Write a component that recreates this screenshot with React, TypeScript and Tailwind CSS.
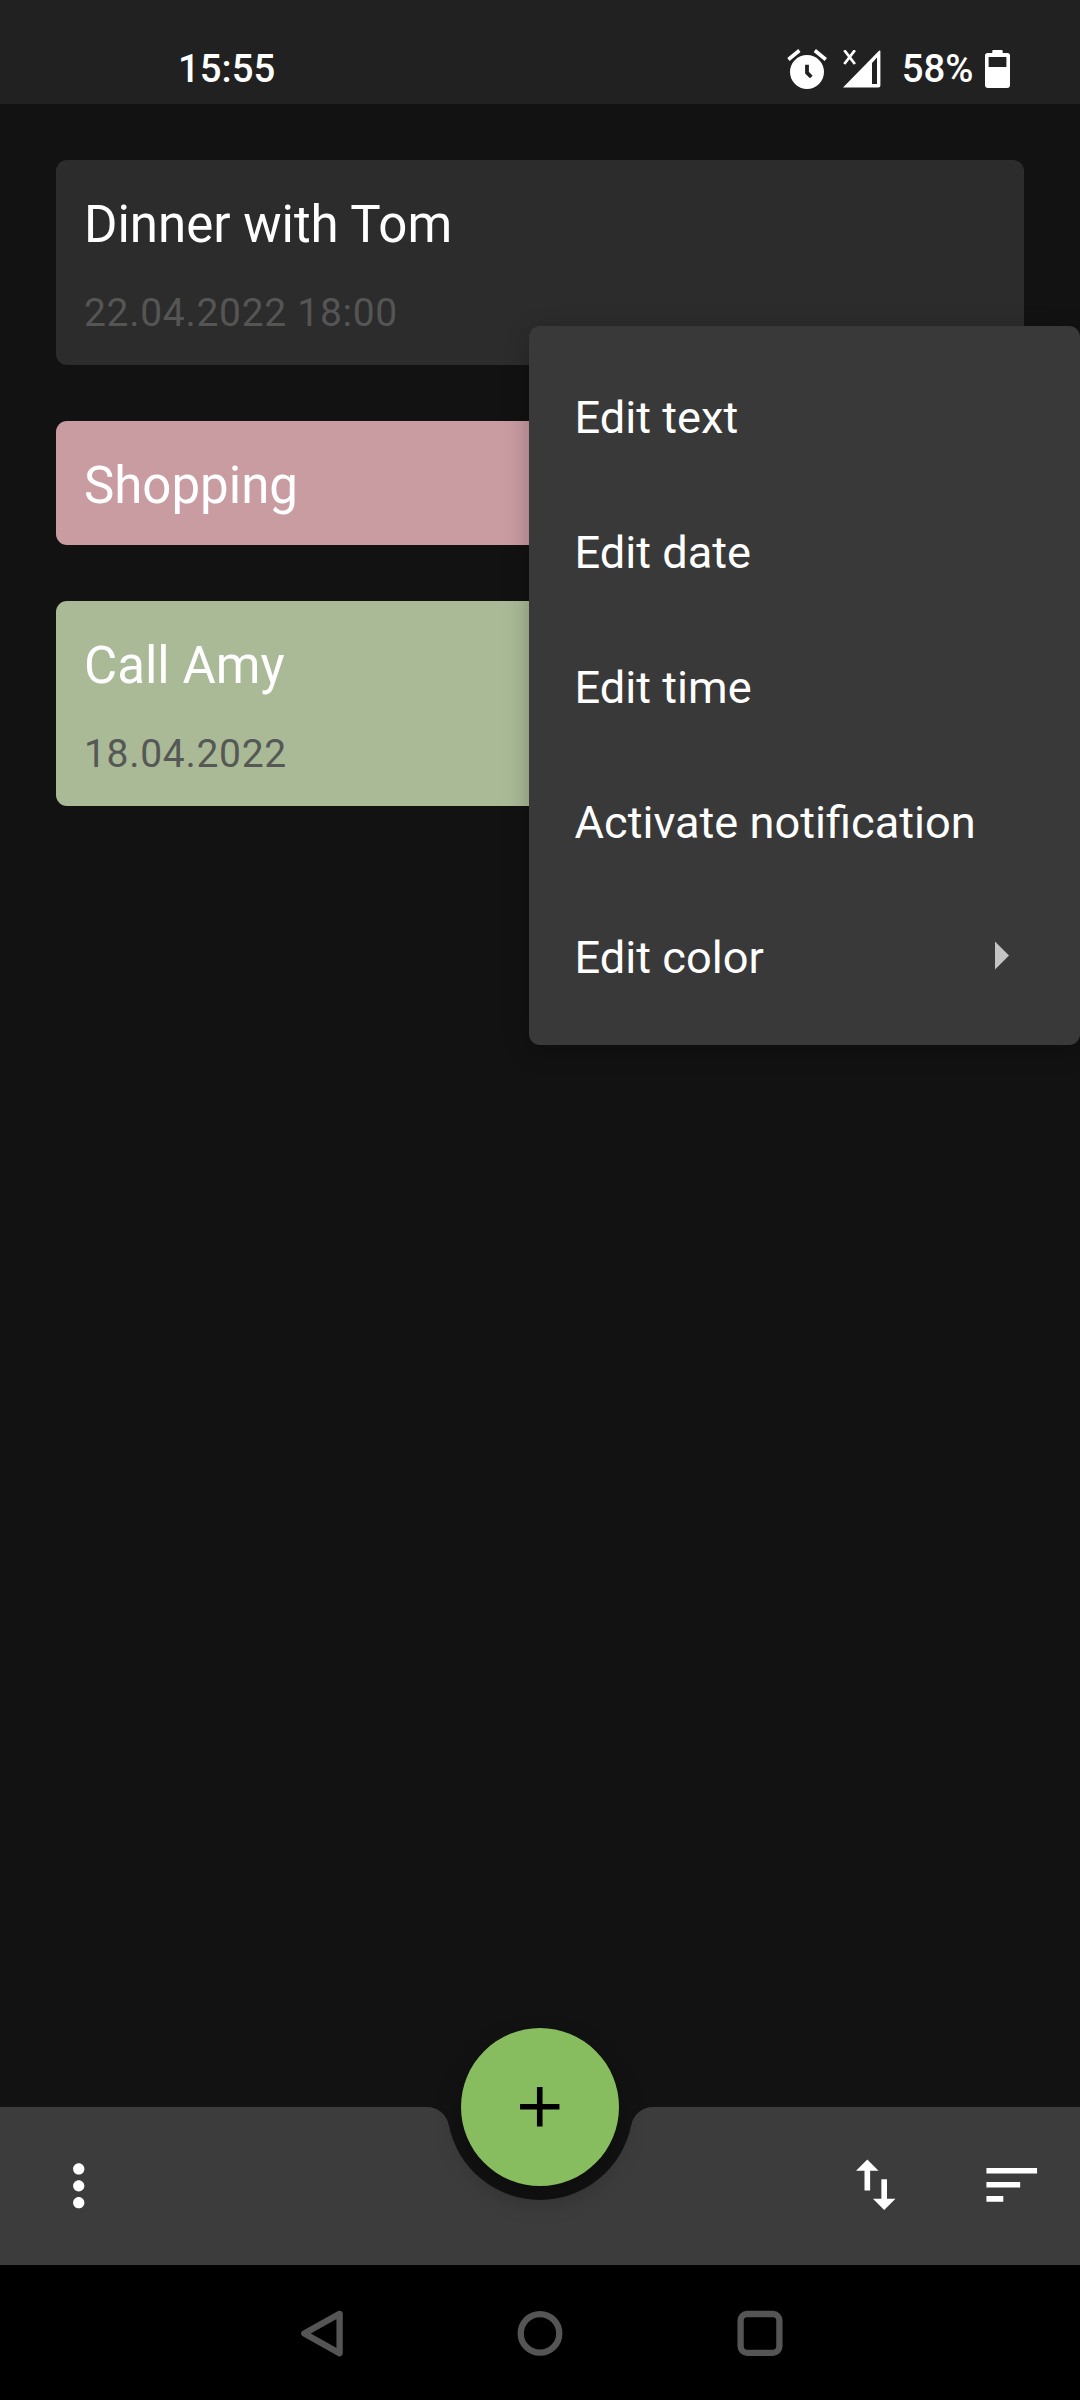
import React from "react";

type Note = { title: string; when?: string; card: string; whenColor?: string };

const notes: Note[] = [
  { title: "Dinner with Tom", when: "22.04.2022 18:00", card: "bg-[#2c2c2c]", whenColor: "text-[#555555]" },
  { title: "Shopping", card: "bg-[#c99ca2]" },
  { title: "Call Amy", when: "18.04.2022", card: "bg-[#aaba97]", whenColor: "text-[#555855]" },
];

const menuItems = ["Edit text", "Edit date", "Edit time", "Activate notification", "Edit color"];

function AlarmIcon() {
  return (
    <svg width="42" height="42" viewBox="786 48 42 42" fill="none">
      <circle cx="807" cy="72" r="17" fill="#fff" />
      <path d="M788.4 59.5L799.4 50.5M825.8 59.5L814.8 50.5" stroke="#fff" strokeWidth="3.6" />
      <path d="M807 64.7V72.7L811.3 77" stroke="#212121" strokeWidth="3.8" />
    </svg>
  );
}

function SignalIcon() {
  return (
    <svg width="38" height="38" viewBox="843 50 38 38">
      <path
        fill="#fff"
        fillRule="evenodd"
        d="M843 87.6L879 50.8Q880.4 49.8 880.4 51.6V85.6Q880.4 87.6 878.4 87.6ZM872 63V84H877V57.4Z"
      />
      <path d="M844.3 50.2L854.9 64M854.9 50.2L844.3 64" stroke="#fff" strokeWidth="2.7" />
    </svg>
  );
}

function BatteryIcon() {
  return (
    <svg width="25" height="38" viewBox="985 50 25 38">
      <path
        fill="#fff"
        fillRule="evenodd"
        d="M992.3 53V51Q992.3 50 993.3 50H1001.7Q1002.7 50 1002.7 51V53H1007.3Q1010 53 1010 55.7V85Q1010 88 1007 88H988Q985 88 985 85V55.7Q985 53 987.7 53ZM988.6 57V67H1006.4V57Z"
      />
    </svg>
  );
}

function StatusBar() {
  return (
    <header className="flex h-[104px] shrink-0 items-start justify-between bg-[#212121] pl-[178px] pr-[70px] pt-[48px] text-[38.3px] font-medium leading-[40px]">
      <span className="pt-px">15:55</span>
      <div className="flex items-start">
        <div className="pr-[15px]">
          <AlarmIcon />
        </div>
        <div className="pt-[2px]">
          <SignalIcon />
        </div>
        <span className="pl-[21px] pr-[11.5px] pt-px">58%</span>
        <div className="pt-[2px]">
          <BatteryIcon />
        </div>
      </div>
    </header>
  );
}

function NoteCard({ note }: { note: Note }) {
  return (
    <article className={`rounded-[11px] px-[28px] pt-[31px] pb-[25px] ${note.card}`}>
      <h2 className="text-[51px] leading-[68px]">{note.title}</h2>
      {note.when && (
        <p className={`mt-[28px] text-[39px] leading-[53px] tracking-[0.0179em] ${note.whenColor}`}>{note.when}</p>
      )}
    </article>
  );
}

function ContextMenu() {
  return (
    <ul className="absolute left-[529px] top-[326px] w-[551px] rounded-[11px] bg-[#393939] py-[22px] shadow-[0_6px_24px_rgba(0,0,0,0.25)]">
      {menuItems.map((label) => (
        <li key={label} className="flex h-[135px] items-center justify-between pl-[45.5px] pr-[71px] text-[45.2px]">
          <span className="whitespace-nowrap pt-[4px]">{label}</span>
          {label === "Edit color" && (
            <svg className="shrink-0" width="14" height="29" viewBox="0 0 14 29">
              <path d="M0 0.5L14 14.5L0 28.5Z" fill="#c4c4c4" />
            </svg>
          )}
        </li>
      ))}
    </ul>
  );
}

function MaterialIcon({ d, fill = "#fff" }: { d: string; fill?: string }) {
  return (
    <svg className="shrink-0" width="67.5" height="67.5" viewBox="0 0 24 24">
      <path d={d} fill={fill} />
    </svg>
  );
}

function BottomBar() {
  return (
    <div className="relative flex h-[158px] shrink-0">
      <div className="flex w-[420px] items-start bg-[#3c3c3c] pl-[45.25px] pt-[45px]">
        <MaterialIcon d="M12 8c1.1 0 2-.9 2-2s-.9-2-2-2-2 .9-2 2 .9 2 2 2zm0 2c-1.1 0-2 .9-2 2s.9 2 2 2 2-.9 2-2-.9-2-2-2zm0 6c-1.1 0-2 .9-2 2s.9 2 2 2 2-.9 2-2-.9-2-2-2z" />
      </div>
      <svg className="shrink-0" width="240" height="158" viewBox="420 0 240 158">
        <path
          fill="#3c3c3c"
          d="M420 0H426.7A22.5 22.5 0 0 1 448.8 18.1A93 93 0 0 0 631.2 18.1A22.5 22.5 0 0 1 653.3 0H660V158H420Z"
        />
      </svg>
      <div className="flex w-[420px] items-start justify-end gap-[68px] bg-[#3c3c3c] pr-[34.75px] pt-[44px]">
        <MaterialIcon d="M16 17.01V10h-2v7.01h-3L15 21l4-3.99h-3zM9 3L5 6.99h3V14h2V6.99h3L9 3z" />
        <MaterialIcon d="M3 18h6v-2H3v2zM3 6v2h18V6H3zm0 7h12v-2H3v2z" />
      </div>
      <button
        aria-label="Add note"
        className="absolute left-[461px] top-[-79px] flex size-[158px] items-center justify-center rounded-full bg-[#87bc5f] shadow-[0_12px_26px_rgba(0,0,0,0.26)]"
      >
        <MaterialIcon d="M19 13h-6v6h-2v-6H5v-2h6V5h2v6h6v2z" fill="#000" />
      </button>
    </div>
  );
}

function SystemNav() {
  return (
    <nav className="flex h-[135px] shrink-0 items-center justify-center gap-[172px] bg-black">
      <svg width="48" height="48" viewBox="0 0 48 48" fill="none" stroke="#555" strokeWidth="6.3" strokeLinejoin="round">
        <path d="M43.6 4.8L8.3 24.5L43.6 44.2Z" />
      </svg>
      <svg width="48" height="48" viewBox="0 0 48 48" fill="none" stroke="#555" strokeWidth="6.3">
        <circle cx="24" cy="24.4" r="19.3" />
      </svg>
      <svg width="48" height="48" viewBox="0 0 48 48" fill="none" stroke="#555" strokeWidth="6.3">
        <rect x="4.6" y="5" width="38.8" height="38.8" rx="6.5" />
      </svg>
    </nav>
  );
}

export default function App() {
  return (
    <div className="relative flex h-[2400px] w-[1080px] flex-col overflow-hidden bg-[#121212] font-['Roboto',sans-serif] text-white">
      <StatusBar />
      <main className="flex flex-1 flex-col gap-[56px] p-[56px]">
        {notes.map((note) => (
          <NoteCard key={note.title} note={note} />
        ))}
      </main>
      <BottomBar />
      <SystemNav />
      <ContextMenu />
    </div>
  );
}
